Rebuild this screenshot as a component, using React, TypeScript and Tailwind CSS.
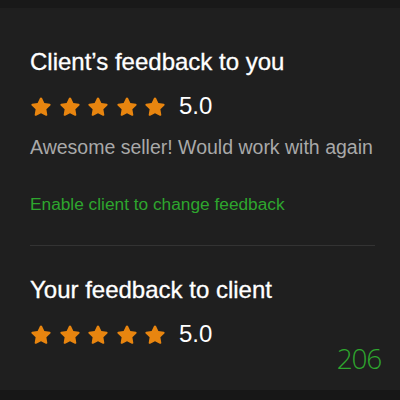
const Star = () => (
  <svg width="22" height="21" viewBox="0 0 24 23" className="shrink-0">
    <path
      d="M12 1.6c.5 0 .9.3 1.1.7l2.6 5.4 5.9.8c.9.1 1.3 1.3.6 1.9l-4.3 4.1 1 5.9c.2.9-.8 1.6-1.6 1.2L12 18.8l-5.3 2.8c-.8.4-1.8-.3-1.6-1.2l1-5.9-4.3-4.1c-.7-.6-.3-1.8.6-1.9l5.9-.8 2.6-5.4c.2-.4.6-.7 1.1-.7z"
      fill="#e8850f"
    />
  </svg>
);

const Rating = ({ value }: { value: string }) => (
  <div className="flex items-center">
    <div className="flex gap-[6.5px]">
      {[0, 1, 2, 3, 4].map((i) => (
        <Star key={i} />
      ))}
    </div>
    <span className="ml-[13px] text-[24px] leading-none text-white">{value}</span>
  </div>
);

export default function App() {
  return (
    <div
      className="flex h-[400px] w-[400px] flex-col overflow-hidden bg-[#1f1f1f]"
      style={{ fontFamily: '"Liberation Sans", Arial, sans-serif' }}
    >
      <div className="h-[8px] shrink-0 bg-[#191919]" />
      <div className="flex flex-1 flex-col px-[30px] pt-[40px]">
        <h2 className="text-[24px] leading-[28px] font-normal text-white [-webkit-text-stroke:0.3px_white]">
          Client’s feedback to you
        </h2>
        <div className="mt-[18px]">
          <Rating value="5.0" />
        </div>
        <p className="-mr-[20px] mt-[17px] whitespace-nowrap text-[19.5px] leading-[24px] text-[#a9a9a9]">
          Awesome seller! Would work with again
        </p>
        <button className="mt-[34px] self-start whitespace-nowrap text-[17.3px] leading-[22px] text-[#2ea62e]">
          Enable client to change feedback
        </button>
        <div className="mt-[30px] h-px w-[345px] bg-[#333333]" />
        <h2 className="mt-[30px] text-[24px] leading-[28px] font-normal text-white [-webkit-text-stroke:0.3px_white]">
          Your feedback to client
        </h2>
        <div className="mt-[18px]">
          <Rating value="5.0" />
        </div>
        <div
          className="-mr-[11px] -mt-[3px] self-end text-[28px] leading-[30px] font-light tracking-[-1.2px] text-[#2ea62e]"
          style={{ fontFamily: '"Open Sans", sans-serif' }}
        >
          206
        </div>
      </div>
      <div className="h-[10px] shrink-0 bg-[#171717]" />
    </div>
  );
}
